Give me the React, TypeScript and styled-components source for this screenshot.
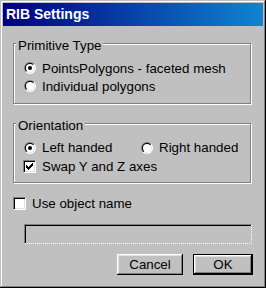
import React from "react";
import styled, { createGlobalStyle } from "styled-components";

const Global = createGlobalStyle`
  html, body { margin: 0; padding: 0; background: #c0c0c0; }
  body {
    font-family: Arial, "Liberation Sans", sans-serif;
    font-size: 13.33px;
    color: #000;
  }
  * { box-sizing: border-box; }
`;

const Window = styled.div`
  width: 266px;
  height: 288px;
  background: #c0c0c0;
  padding: 3px;
  display: flex;
  flex-direction: column;
  box-shadow: inset -1px -1px 0 #000, inset 1px 1px 0 #c0c0c0,
    inset -2px -2px 0 #808080, inset 2px 2px 0 #fff;
`;

const TitleBar = styled.div`
  height: 23px;
  flex: none;
  display: flex;
  align-items: center;
  padding-left: 3px;
  background: linear-gradient(to right, #000080, #1084d0);
  color: #fff;
  font-weight: bold;
  font-size: 14px;
  line-height: 23px;
`;

const Body = styled.div`
  flex: 1;
  display: flex;
  flex-direction: column;
  padding: 17px 12px 0 10px;
`;

const GroupBox = styled.div<{ $mt?: number; $pb: number }>`
  display: flex;
  flex-direction: column;
  margin-top: ${(p) => p.$mt ?? 0}px;
  padding: 0 0 ${(p) => p.$pb}px 9px;
  border: 1px solid #808080;
  box-shadow: inset 1px 1px 0 #fff, 1px 1px 0 #fff;
`;

const Caption = styled.span<{ $gap: number }>`
  align-self: flex-start;
  margin: -6px 0 ${(p) => p.$gap}px -7px;
  padding: 0 2px;
  line-height: 15px;
  background: #c0c0c0;
`;

const Row = styled.div<{ $h: number }>`
  height: ${(p) => p.$h}px;
  display: flex;
  align-items: center;
`;

const Option = styled.label<{ $w?: number }>`
  display: flex;
  align-items: center;
  gap: 6px;
  width: ${(p) => (p.$w ? `${p.$w}px` : "auto")};
  white-space: nowrap;
`;

const ControlSlot = styled.span`
  width: 13px;
  height: 13px;
  display: flex;
  align-items: center;
  justify-content: flex-end;
  flex: none;
`;

const CheckBox = styled.span`
  width: 13px;
  height: 13px;
  background: #fff;
  border-top: 1px solid #808080;
  border-left: 1px solid #808080;
  border-right: 1px solid #fff;
  border-bottom: 1px solid #fff;
  box-shadow: inset 1px 1px 0 #000, inset -1px -1px 0 #dfdfdf;
  display: flex;
  flex: none;
`;

const UseRow = styled(Row)`
  margin-top: 11px;
`;

const TextField = styled.div`
  height: 20px;
  margin: 12px -1px 0 11px;
  background: #c0c0c0;
  border-top: 1px solid #808080;
  border-left: 1px solid #808080;
  border-right: 1px dotted #fff;
  border-bottom: 1px dotted #fff;
  box-shadow: inset 1px 1px 0 #000;
`;

const ButtonRow = styled.div`
  display: flex;
  justify-content: flex-end;
  gap: 10px;
  margin: 10px -2px 0 0;
`;

const Button = styled.button<{ $w: number; $default?: boolean }>`
  width: ${(p) => p.$w}px;
  height: 21px;
  padding: 0;
  margin: 0;
  font: inherit;
  color: #000;
  background: #c0c0c0;
  border: ${(p) => (p.$default ? "1px solid #000" : "none")};
  box-shadow: inset -1px -1px 0 #000, inset 1px 1px 0 #fff,
    inset -2px -2px 0 #808080, inset 2px 2px 0 #dfdfdf;
  line-height: 19px;
  text-align: center;
`;

const Radio: React.FC<{ checked?: boolean }> = ({ checked }) => (
  <svg width="12" height="12" viewBox="0 0 12 12" style={{ display: "block" }}>
    <defs>
      <linearGradient id="rOut" x1="0" y1="0" x2="1" y2="1">
        <stop offset="0.5" stopColor="#808080" />
        <stop offset="0.5" stopColor="#ffffff" />
      </linearGradient>
      <linearGradient id="rIn" x1="0" y1="0" x2="1" y2="1">
        <stop offset="0.5" stopColor="#000000" />
        <stop offset="0.5" stopColor="#dfdfdf" />
      </linearGradient>
    </defs>
    <circle cx="6" cy="6" r="6" fill="url(#rOut)" />
    <circle cx="6" cy="6" r="5" fill="url(#rIn)" />
    <circle cx="6" cy="6" r="4" fill="#fff" />
    {checked && <circle cx="6" cy="6" r="2" fill="#000" />}
  </svg>
);

const Check: React.FC<{ checked?: boolean }> = ({ checked }) => (
  <CheckBox>
    {checked && (
      <svg width="11" height="11" viewBox="0 0 11 11" shapeRendering="crispEdges" style={{ display: "block" }}>
        <path
          d="M2 4h1v3H2zM3 5h1v3H3zM4 6h1v3H4zM5 5h1v3H5zM6 4h1v3H6zM7 3h1v3H7zM8 2h1v3H8z"
          fill="#000"
        />
      </svg>
    )}
  </CheckBox>
);

export default function App() {
  return (
    <>
      <Global />
      <Window>
        <TitleBar>RIB Settings</TitleBar>
        <Body>
          <GroupBox $pb={8}>
            <Caption $gap={6}>Primitive Type</Caption>
            <Row $h={18}>
              <Option>
                <ControlSlot>
                  <Radio checked />
                </ControlSlot>
                PointsPolygons - faceted mesh
              </Option>
            </Row>
            <Row $h={18}>
              <Option>
                <ControlSlot>
                  <Radio />
                </ControlSlot>
                Individual polygons
              </Option>
            </Row>
          </GroupBox>
          <GroupBox $mt={19} $pb={6}>
            <Caption $gap={5}>Orientation</Caption>
            <Row $h={19}>
              <Option $w={117}>
                <ControlSlot>
                  <Radio checked />
                </ControlSlot>
                Left handed
              </Option>
              <Option>
                <ControlSlot>
                  <Radio />
                </ControlSlot>
                Right handed
              </Option>
            </Row>
            <Row $h={19}>
              <Option>
                <Check checked />
                Swap Y and Z axes
              </Option>
            </Row>
          </GroupBox>
          <UseRow $h={18}>
            <Option>
              <Check />
              Use object name
            </Option>
          </UseRow>
          <TextField />
          <ButtonRow>
            <Button $w={66}>Cancel</Button>
            <Button $w={60} $default>
              OK
            </Button>
          </ButtonRow>
        </Body>
      </Window>
    </>
  );
}
